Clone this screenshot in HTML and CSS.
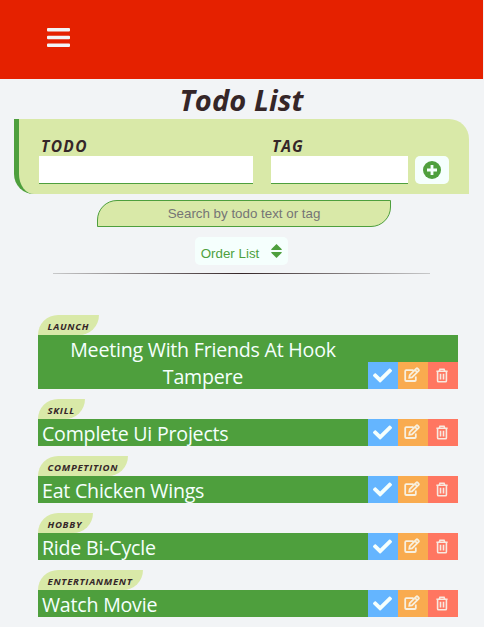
FILE: index.html
```html
<!DOCTYPE html>
<html lang="en">
<head>
<meta charset="utf-8">
<title>Todo List</title>
<link rel="stylesheet" href="styles.css">
</head>
<body>
<svg class="sprite" aria-hidden="true">
  <symbol id="check" viewBox="0 0 512 512"><path d="M173.9 439.4l-166.4-166.4c-10-10-10-26.2 0-36.2l36.2-36.2c10-10 26.2-10 36.2 0L192 312.7 432.1 72.600c10-10 26.2-10 36.2 0l36.2 36.2c10 10 10 26.200 0 36.200l-294.400 294.400c-10 10-26.200 10-36.200 0z"/></symbol>
  <symbol id="edit" viewBox="0 0 16 16"><path d="M9.500 3.200H2.200Q1.200 3.200 1.200 4.200V13Q1.200 14 2.200 14H10.800Q11.800 14 11.800 13V9.500M5.300 10.700L5.700 8.200L12.300 1.600Q13 .9 13.700 1.600L14.600 2.500Q15.200 3.200 14.600 3.800L8 10.300ZM11 3L13.100 5.200" fill="none" stroke="currentColor" stroke-width="1.800"/></symbol>
  <symbol id="trash" viewBox="0 0 14 16"><path d="M1 3.500H13M4 3.500L4.800 1.300H9.200L10 3.500M2.300 3.500V13.500Q2.300 14.700 3.300 14.700H10.700Q11.700 14.700 11.700 13.500V3.500M5.400 6V12.300M8.600 6V12.300" fill="none" stroke="currentColor" stroke-width="1.700"/></symbol>
</svg>
<header class="topbar">
  <button class="menu" aria-label="Menu"><svg viewBox="0 0 23 19"><path d="M1 0h21q1 0 1 1v1.500q0 1-1 1H1q-1 0-1-1V1q0-1 1-1zM1 7.700h21q1 0 1 1v1.500q0 1-1 1H1q-1 0-1-1V8.700q0-1 1-1zM1 15.400h21q1 0 1 1v1.500q0 1-1 1H1q-1 0-1-1v-1.500q0-1 1-1z"/></svg></button>
</header>
<main class="page">
  <h1 class="title">Todo List</h1>
  <form class="form">
    <label class="field field-todo"><span>TODO</span><input type="text"></label>
    <label class="field field-tag"><span>TAG</span><input type="text"></label>
    <button class="add" type="button" aria-label="Add"><svg viewBox="0 0 18 18"><circle cx="9" cy="9" r="9"/><path d="M9 4v10M4 9h10" stroke="#f5fffd" stroke-width="2.800"/></svg></button>
  </form>
  <input class="search" type="text" placeholder="Search by todo text or tag">
  <button class="order" type="button"><span>Order List</span><svg viewBox="0 0 11 14"><path d="M5.500 0L10.800 5.300Q11 6 10.300 6H.7Q0 6 .2 5.300ZM5.500 14L.2 8.700Q0 8 .7 8H10.300Q11 8 10.800 8.700Z"/></svg></button>
  <div class="divider"></div>
  <ul class="list">
    <li class="item"><span class="tag t1">LAUNCH</span><div class="bar"><p class="text first">Meeting With Friends At Hook Tampere</p><div class="actions"><button class="done"><svg><use href="#check"/></svg></button><button class="edit"><svg><use href="#edit"/></svg></button><button class="remove"><svg><use href="#trash"/></svg></button></div></div></li>
    <li class="item"><span class="tag t2">SKILL</span><div class="bar"><p class="text">Complete Ui Projects</p><div class="actions"><button class="done"><svg><use href="#check"/></svg></button><button class="edit"><svg><use href="#edit"/></svg></button><button class="remove"><svg><use href="#trash"/></svg></button></div></div></li>
    <li class="item"><span class="tag t3">COMPETITION</span><div class="bar"><p class="text">Eat Chicken Wings</p><div class="actions"><button class="done"><svg><use href="#check"/></svg></button><button class="edit"><svg><use href="#edit"/></svg></button><button class="remove"><svg><use href="#trash"/></svg></button></div></div></li>
    <li class="item"><span class="tag t4">HOBBY</span><div class="bar"><p class="text">Ride Bi-Cycle</p><div class="actions"><button class="done"><svg><use href="#check"/></svg></button><button class="edit"><svg><use href="#edit"/></svg></button><button class="remove"><svg><use href="#trash"/></svg></button></div></div></li>
    <li class="item"><span class="tag t5">ENTERTIANMENT</span><div class="bar"><p class="text">Watch Movie</p><div class="actions"><button class="done"><svg><use href="#check"/></svg></button><button class="edit"><svg><use href="#edit"/></svg></button><button class="remove"><svg><use href="#trash"/></svg></button></div></div></li>
  </ul>
</main>
</body>
</html>
```
FILE: styles.css
```css
* { box-sizing: border-box; margin: 0; padding: 0; }
body { width: 484px; height: 627px; overflow: hidden; background: #f2f4f6; color: #352628; font-family: "Open Sans", "Noto Sans", sans-serif; }
button { border: 0; display: flex; align-items: center; justify-content: center; }
svg { display: block; fill: currentColor; }
.sprite { display: none; }
.topbar { width: 483px; height: 79px; background: #e52100; padding: 28px 0 0 47px; }
.menu { background: none; color: #f2f4f6; }
.menu svg { width: 23px; height: 19px; }
.page { width: 483px; display: flex; flex-direction: column; align-items: center; }
.title { height: 40px; font-size: 29px; line-height: 42px; font-style: italic; font-weight: 700; white-space: nowrap; letter-spacing: .1px; }
.form { width: 455px; height: 75px; display: flex; align-items: flex-start; padding: 16px 0 0 20px; background: #d9e9a8; border-left: 5px solid #4e9f3d; border-radius: 0 20px 0 20px; }
.field { display: flex; flex-direction: column; font-size: 15.500px; font-style: italic; font-weight: 700; letter-spacing: 1.400px; }
.field span { height: 21px; padding-left: 2px; line-height: 22px; }
.field-tag span { padding-left: 1px; letter-spacing: 1px; }
.field input { width: 100%; height: 28px; border: 0; border-bottom: 1px solid #4e9f3d; background: #fff; }
.field-todo { width: 214px; margin-right: 18px; }
.field-tag { width: 137px; margin-right: 7px; }
.add { width: 34px; height: 28px; margin-top: 21px; border-radius: 5px; background: #f5fffd; color: #4e9f3d; }
.add svg { width: 18px; height: 18px; }
.search { width: 294px; height: 27px; margin: 6px 0 10px 5px; border: 1px solid #4e9f3d; border-radius: 20px 0; background: #d9e9a8; font: 13.333px "Liberation Sans", sans-serif; text-align: center; }
.search::placeholder { color: #757575; }
.order { width: 93px; height: 28px; gap: 12px; border-radius: 5px; background: #f5fffd; color: #4e9f3d; font: 13.333px "Liberation Sans", sans-serif; }
.order span { padding-top: 4px; }
.order svg { width: 11px; height: 14px; }
.divider { width: 377px; height: 1px; margin: 8px 0 41px; background: linear-gradient(90deg, #c8c9ca, #352628 50%, #c8c9ca); }
.list { width: 420px; margin-right: -13px; list-style: none; display: flex; flex-direction: column; gap: 10px; }
.tag { display: block; height: 20px; padding-left: 9.500px; background: #d9e9a8; border-radius: 20px 0; font-size: 9.600px; line-height: 24px; font-style: italic; font-weight: 700; letter-spacing: .7px; white-space: nowrap; }
.t1 { width: 61px; }
.t2 { width: 47px; }
.t3 { width: 90px; }
.t4 { width: 55px; }
.t5 { width: 105px; }
.bar { display: flex; align-items: flex-end; background: #4e9f3d; }
.text { width: 330px; padding: 1px 4px 0; color: #f5fffd; font-size: 19.600px; line-height: 27px; height: 27px; letter-spacing: -.22px; }
.first { height: 54px; text-align: center; }
.actions { display: flex; height: 27px; }
.actions button { width: 30px; height: 27px; padding: 0 1px 1px 0; color: #f5fffd; }
.actions .done { background: #64b5ff; }
.actions .edit { background: #f9ab4f; color: #f8f0df; padding-right: 2px; }
.actions .remove { background: #ff7661; color: #f8e9e0; padding-right: 2px; }
.done svg { width: 19px; height: 19px; }
.edit svg { width: 16px; height: 16px; }
.remove svg { width: 14px; height: 15px; }
```
